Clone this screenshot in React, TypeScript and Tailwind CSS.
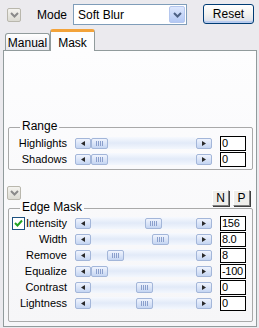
import React from "react";

const Chevron = ({ color = "#4d6185" }: { color?: string }) => (
  <svg width="9" height="6" viewBox="0 0 9 6">
    <polyline points="1,1 4.5,4.5 8,1" fill="none" stroke={color} strokeWidth="2" />
  </svg>
);

const SmallDrop: React.FC<{ className?: string }> = ({ className = "" }) => (
  <div
    className={`w-[14px] h-[14px] rounded-[2px] border border-[#b9b7ad] bg-gradient-to-b from-[#f4f3ef] to-[#dcdbd3] flex items-center justify-center ${className}`}
  >
    <Chevron color="#8a8a8a" />
  </div>
);

const Arrow = ({ dir }: { dir: "l" | "r" }) => (
  <svg width="4" height="5" viewBox="0 0 4 5">
    {dir === "l" ? <polygon points="4,0 0,2.5 4,5" fill="#2a2a2a" /> : <polygon points="0,0 4,2.5 0,5" fill="#2a2a2a" />}
  </svg>
);

const ScrollBtn = ({ dir }: { dir: "l" | "r" }) => (
  <div className="w-[16px] h-[11px] shrink-0 rounded-[2px] border border-[#a3b6d9] bg-gradient-to-b from-[#f0f4fd] to-[#c5d5f2] flex items-center justify-center">
    <Arrow dir={dir} />
  </div>
);

const Slider = ({ pos }: { pos: number }) => (
  <div className="flex items-center w-[137px] h-[12px]">
    <ScrollBtn dir="l" />
    <div className="relative flex-1 h-[12px] rounded-[2px] bg-gradient-to-b from-[#f7f9fe] via-[#e2eaf8] to-[#f3f7fd]">
      <div
        className="absolute top-[0.5px] h-[11px] w-[17px] rounded-[2px] border border-[#a3b6d9] bg-gradient-to-b from-[#f0f4fd] to-[#c5d5f2] flex items-center justify-center gap-[1px]"
        style={{ left: pos }}
      >
        <div className="w-[1px] h-[5px] bg-[#8a9fcc]" />
        <div className="w-[1px] h-[5px] bg-[#8a9fcc]" />
        <div className="w-[1px] h-[5px] bg-[#8a9fcc]" />
        <div className="w-[1px] h-[5px] bg-[#8a9fcc]" />
      </div>
    </div>
    <ScrollBtn dir="r" />
  </div>
);

const Row = ({ label, pos, value, check }: { label: string; pos: number; value: string; check?: boolean }) => (
  <div className="flex items-center h-[16px]">
    <div className="w-[58px] flex items-center justify-end">
      {check && (
        <div className="mr-auto ml-[3px] w-[13px] h-[13px] border border-[#1c5180] bg-white flex items-center justify-center">
          <svg width="9" height="8" viewBox="0 0 9 8">
            <polyline points="1,4 3.5,6.5 8,1.5" fill="none" stroke="#21a121" strokeWidth="2" />
          </svg>
        </div>
      )}
      <span className="leading-none text-[11px]">{label}</span>
    </div>
    <div className="ml-[8px]">
      <Slider pos={pos} />
    </div>
    <div className="ml-[8px] w-[26px] h-[15px] border border-black bg-white pl-[1px] text-[11px] leading-[13px] tracking-[-0.3px] overflow-hidden">
      {value}
    </div>
  </div>
);

const Group = ({ title, children, className = "" }: { title: string; children: React.ReactNode; className?: string }) => (
  <div className={`relative ml-[4px] w-[245px] border border-[#a9a9a9] rounded-[2px] ${className}`}>
    <span className="absolute top-[-8px] left-[11px] px-[2px] bg-[#fbfbfc] text-[12px] leading-none">{title}</span>
    {children}
  </div>
);

const NPButton = ({ label }: { label: string }) => (
  <div className="w-[17px] h-[16px] border border-t-white border-l-white border-r-[#808080] border-b-[#808080] bg-[#efeeeb] shadow-[1px_1px_0_#404040] flex items-center justify-center text-[12px] leading-none">
    {label}
  </div>
);

export default function App() {
  return (
    <div className="w-[259px] h-[328px] bg-[#ebeaee] text-black text-[11px] font-['Liberation_Sans',Arial,sans-serif] overflow-hidden">
      <div className="flex h-[29px]">
        <SmallDrop className="ml-[7px] mt-[8px]" />
        <span className="ml-[16px] mt-[9px] w-[36px] text-[12px] leading-none">Mode</span>
        <div className="mt-[4px] w-[114px] h-[21px] border border-[#7f9db9] bg-white flex items-center justify-between pl-[4px] pr-[1px]">
          <span className="text-[12px] leading-none">Soft Blur</span>
          <div className="w-[16px] h-[17px] rounded-[2px] border border-[#b5c7ee] bg-gradient-to-b from-[#dde7fd] to-[#b3c8f4] flex items-center justify-center">
            <Chevron />
          </div>
        </div>
        <div className="ml-[16px] mt-[4px] w-[51px] h-[20px] rounded-[3px] border border-[#003c74] bg-gradient-to-b from-white via-[#f3f3ef] to-[#d8dde9] shadow-[inset_0_-2px_0_#b8cbee] flex items-center justify-center text-[12px]">
          Reset
        </div>
      </div>
      <div className="flex items-end h-[21px] pl-[5px]">
        <div className="w-[45px] h-[17px] border border-b-0 border-[#919b9c] rounded-t-[3px] bg-gradient-to-b from-white to-[#e6e6ec] flex items-center justify-center text-[12px] pt-[1px]">
          Manual
        </div>
        <div className="relative z-10 w-[45px] h-[22px] mb-[-1px] border-x border-[#919b9c] border-t-[3px] border-t-[#f3a33a] rounded-t-[3px] bg-[#fdfdfe] flex justify-center text-[12px] pt-[2px]">
          Mask
        </div>
      </div>
      <div className="ml-[3px] w-[254px] h-[277px] border border-[#919b9c] bg-gradient-to-b from-[#fdfdfe] to-[#f6f6f8]">
        <Group title="Range" className="mt-[76px] pt-[7px] pb-[2px]">
          <Row label="Highlights" pos={0} value="0" />
          <Row label="Shadows" pos={0} value="0" />
        </Group>
        <div className="flex h-[20px] mt-[16px]">
          <SmallDrop className="ml-[3px] w-[13px] h-[13px]" />
          <div className="ml-auto mr-[6px] mt-[4px] flex gap-[4px]">
            <NPButton label="N" />
            <NPButton label="P" />
          </div>
        </div>
        <Group title="Edge Mask" className="mt-[2px] pt-[6px] pb-[10px]">
          <Row label="Intensity" pos={54} value="156" check />
          <Row label="Width" pos={61} value="8.0" />
          <Row label="Remove" pos={16} value="8" />
          <Row label="Equalize" pos={0} value="-100" />
          <Row label="Contrast" pos={45} value="0" />
          <Row label="Lightness" pos={45} value="0" />
        </Group>
      </div>
    </div>
  );
}
